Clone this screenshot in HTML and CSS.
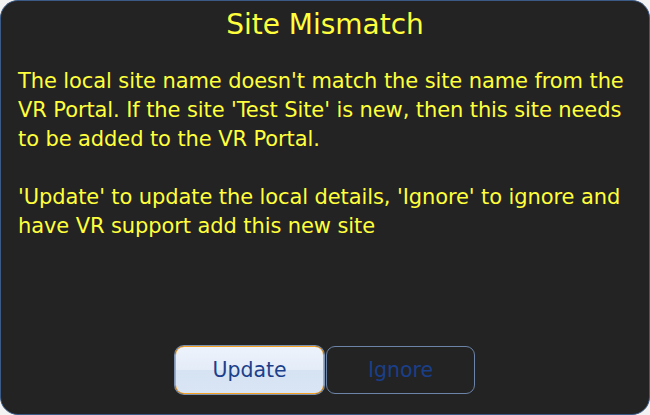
FILE: index.html
```html
<!DOCTYPE html>
<html lang="en">
<head>
    <meta charset="UTF-8">
    <title>Site Mismatch</title>
    <link rel="stylesheet" href="styles.css">
</head>
<body>

    <div class="dialog">
        <h1 class="title">Site Mismatch</h1>

        <div class="message">
            <p>The local site name doesn't match the site name from the VR Portal. If the site 'Test Site' is new, then this site needs to be added to the VR Portal.</p>
            <p>'Update' to update the local details, 'Ignore' to ignore and have VR support add this new site</p>
        </div>

        <div class="buttons">
            <button class="btn btn-primary">Update</button>
            <button class="btn btn-secondary">Ignore</button>
        </div>
    </div>

</body>
</html>
```

FILE: styles.css
```css
/* General */
html, body {
    margin: 0;
    padding: 0;
    background: #f3f3f3;
}

body {
    width: 650px;
    height: 415px;
    font-family: 'DejaVu Sans', Verdana, sans-serif;
}

/* Dialog */
.dialog {
    box-sizing: border-box;
    width: 650px;
    height: 415px;
    background: #232323;
    border: 1px solid #3b5a86;
    border-radius: 18px;
    display: flex;
    flex-direction: column;
    padding: 6px 17px 20px 17px;
}

.title {
    margin: 0;
    text-align: center;
    color: #ffff3c;
    font-size: 28px;
    font-weight: normal;
    line-height: 36px;
}

/* Message */
.message {
    flex: 1;
    margin-top: 24px;
    color: #ffff3c;
    font-size: 21px;
    letter-spacing: -0.1px;
    line-height: 29px;
}

.message p {
    margin: 0 0 29px 0;
}

/* Buttons */
.buttons {
    display: flex;
    justify-content: center;
    gap: 2px;
}

.btn {
    width: 149px;
    height: 48px;
    border-radius: 9px;
    font-family: inherit;
    font-size: 20.5px;
    color: #1c3f8c;
    cursor: pointer;
}

.btn-primary {
    border: 1px solid #f5a020;
    box-shadow: 0 0 0 1px #7f93b0;
    background: linear-gradient(#edf3fc 0%, #e4ecf8 50%, #d6e3f3 51%, #d9e5f4 100%);
}

.btn-secondary {
    border: 1px solid #6b84a8;
    background: transparent;
    color: #1a3f8a;
}
```
